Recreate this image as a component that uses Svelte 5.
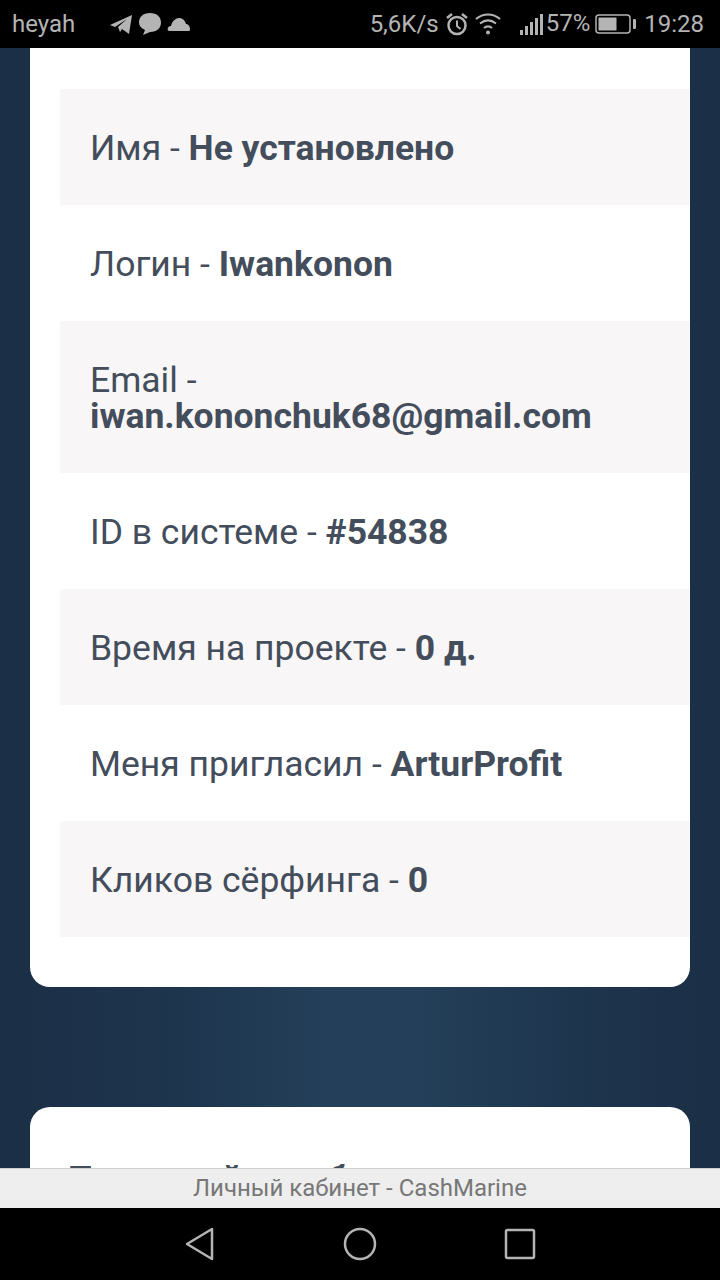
<script lang="ts">
  const rows = [
    { label: "Имя", value: "Не установлено" },
    { label: "Логин", value: "Iwankonon" },
    { label: "Email", value: "iwan.kononchuk68@gmail.com" },
    { label: "ID в системе", value: "#54838" },
    { label: "Время на проекте", value: "0 д." },
    { label: "Меня пригласил", value: "ArturProfit" },
    { label: "Кликов сёрфинга", value: "0" },
  ];
</script>

<div class="screen">
  <header class="status-bar">
    <div class="status-left">
      <span class="carrier">heyah</span>
      <div class="notif-icons">
        <svg width="24" height="22" viewBox="0 0 24 22" fill="#b4b4b4">
          <path d="M1 12 L23 2 L20 21 L13 16 L11 19 L9 14 L18 6 L6 14 Z" />
        </svg>
        <svg width="24" height="24" viewBox="0 0 24 24" fill="#b4b4b4">
          <path d="M12 1 C19 1 23 5 23 10.500 C23 16 19 20 12 20 L5 23 L7 18 C3 16 1 14 1 10.500 C1 5 5 1 12 1 Z" />
        </svg>
        <svg width="24" height="16" viewBox="0 0 24 16" fill="#b4b4b4">
          <path d="M2 15 C0 15 0 10 4 10 C5 5 9 2 12 2 C15 2 18 4 19 8 C23 8 24 15 22 15 Z" />
        </svg>
      </div>
    </div>
    <div class="status-right">
      <span class="speed">5,6K/s</span>
      <svg class="alarm" width="24" height="24" viewBox="0 0 24 24" fill="none" stroke="#b4b4b4" stroke-width="2.500">
        <circle cx="12" cy="13.500" r="8.500" />
        <path d="M12 8.500 V14 L15.500 17" stroke-width="2" />
        <path d="M2 6 L7 2 M22 6 L17 2" />
      </svg>
      <svg class="wifi" width="26" height="22" viewBox="0 0 26 22" fill="none" stroke="#b4b4b4" stroke-width="2.200">
        <path d="M1 6 C8 0 18 0 25 6" />
        <path d="M5 10.500 C10 6.500 16 6.500 21 10.500" />
        <path d="M9 15 C11.500 13 14.500 13 17 15" />
        <circle cx="13" cy="19.500" r="2" fill="#b4b4b4" stroke="none" />
      </svg>
      <svg class="signal" width="24" height="22" viewBox="0 0 24 22" fill="#b4b4b4">
        <rect x="0" y="17" width="3" height="5" />
        <rect x="5" y="13" width="3" height="9" />
        <rect x="10" y="9" width="3" height="13" />
        <rect x="15" y="5" width="3" height="17" />
        <rect x="20" y="1" width="3" height="21" />
      </svg>
      <span class="percent">57%</span>
      <svg class="battery" width="41" height="20" viewBox="0 0 41 20" fill="none">
        <rect x="1" y="1" width="34" height="18" rx="3" stroke="#b4b4b4" stroke-width="1.500" />
        <rect x="3.500" y="3.500" width="18" height="13" fill="#b4b4b4" />
        <rect x="38" y="5" width="3" height="10" rx="1" fill="#b4b4b4" />
      </svg>
      <span class="time">19:28</span>
    </div>
  </header>

  <main class="page">
    <section class="card info-card">
      <ul class="info-list">
        {#each rows as row}
          <li>{row.label} - <b>{row.value}</b></li>
        {/each}
      </ul>
    </section>

    <section class="card next-card">
      <h2>Плановый заработок</h2>
    </section>
  </main>

  <div class="url-bar">Личный кабинет - CashMarine</div>

  <nav class="nav-bar">
    <svg width="32" height="34" viewBox="0 0 32 34" fill="none" stroke="#b4b4b4" stroke-width="2.500" stroke-linejoin="round">
      <path d="M28 2 V32 L3 17 Z" />
    </svg>
    <svg width="34" height="34" viewBox="0 0 34 34" fill="none" stroke="#b4b4b4" stroke-width="2.500">
      <circle cx="17" cy="17" r="15" />
    </svg>
    <svg width="32" height="32" viewBox="0 0 32 32" fill="none" stroke="#b4b4b4" stroke-width="2.500" stroke-linejoin="round">
      <rect x="2" y="2" width="28" height="28" rx="1.500" />
    </svg>
  </nav>
</div>

<style>
  :global(body) {
    margin: 0;
    background: #000;
  }

  .screen {
    width: 720px;
    height: 1280px;
    display: flex;
    flex-direction: column;
    overflow: hidden;
    font-family: Roboto, "Noto Sans", sans-serif;
  }

  .status-bar {
    flex: 0 0 48px;
    display: flex;
    justify-content: space-between;
    align-items: center;
    padding: 0 16px 0 12px;
    background: #000;
    color: #b4b4b4;
    font-size: 24px;
  }

  .status-left,
  .status-right,
  .notif-icons {
    display: flex;
    align-items: center;
  }

  .notif-icons {
    gap: 5px;
    margin-left: 34px;
  }

  .alarm {
    margin-left: 6px;
  }

  .wifi {
    margin-left: 6px;
  }

  .signal {
    margin-left: 19px;
  }

  .percent {
    margin-left: 2px;
    font-size: 24px;
    transform: translateY(-1px);
  }

  .battery {
    margin-left: 5px;
  }

  .time {
    margin-left: 8px;
  }

  .page {
    flex: 1;
    min-height: 0;
    overflow: hidden;
    padding: 0 30px;
    background: linear-gradient(90deg, #1b2f46 0%, #1e354e 25%, #243f59 45%, #243f59 58%, #1e354e 80%, #1b2f46 100%);
  }

  .card {
    background: #fff;
  }

  .info-card {
    height: 939px;
    padding-top: 41px;
    box-sizing: border-box;
    border-radius: 0 0 20px 20px;
  }

  .info-list {
    margin: 0 0 0 30px;
    padding: 0;
    list-style: none;
    color: #434d5b;
    font-size: 35.500px;
    line-height: 36px;
  }

  .info-list li {
    padding: 41px 80px 39px 30px;
  }

  .info-list li:nth-child(odd) {
    background: #f8f6f7;
  }

  .info-list b {
    font-weight: 700;
  }

  .next-card {
    margin-top: 120px;
    height: 200px;
    padding: 54px 38px;
    border-radius: 20px 20px 0 0;
  }

  .next-card h2 {
    margin: 0;
    color: #434d5b;
    font-size: 35.500px;
    font-weight: 700;
    line-height: 36px;
  }

  .url-bar {
    flex: 0 0 40px;
    display: flex;
    align-items: center;
    justify-content: center;
    box-sizing: border-box;
    border-top: 1px solid #cfcfcf;
    padding-bottom: 2px;
    background: #eee;
    color: #777;
    font-size: 24px;
  }

  .nav-bar {
    flex: 0 0 72px;
    display: flex;
    justify-content: center;
    align-items: center;
    gap: 127px;
    background: #000;
  }
</style>
